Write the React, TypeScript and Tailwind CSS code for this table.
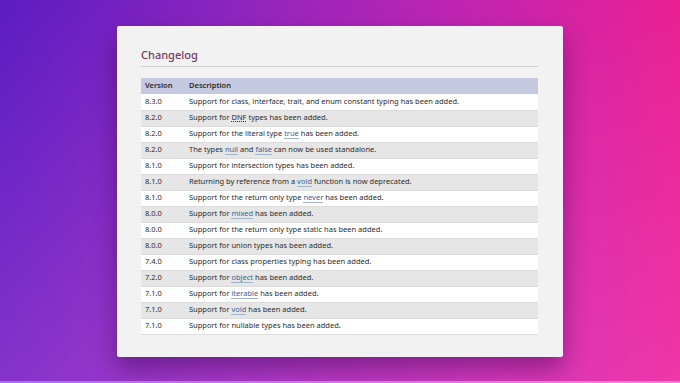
import React from "react";

type Part = string | { code: string; abbr?: boolean };

const rows: { version: string; desc: Part[] }[] = [
  { version: "8.3.0", desc: ["Support for class, interface, trait, and enum constant typing has been added."] },
  { version: "8.2.0", desc: ["Support for ", { code: "DNF", abbr: true }, " types has been added."] },
  { version: "8.2.0", desc: ["Support for the literal type ", { code: "true" }, " has been added."] },
  { version: "8.2.0", desc: ["The types ", { code: "null" }, " and ", { code: "false" }, " can now be used standalone."] },
  { version: "8.1.0", desc: ["Support for intersection types has been added."] },
  { version: "8.1.0", desc: ["Returning by reference from a ", { code: "void" }, " function is now deprecated."] },
  { version: "8.1.0", desc: ["Support for the return only type ", { code: "never" }, " has been added."] },
  { version: "8.0.0", desc: ["Support for ", { code: "mixed" }, " has been added."] },
  { version: "8.0.0", desc: ["Support for the return only type static has been added."] },
  { version: "8.0.0", desc: ["Support for union types has been added."] },
  { version: "7.4.0", desc: ["Support for class properties typing has been added."] },
  { version: "7.2.0", desc: ["Support for ", { code: "object" }, " has been added."] },
  { version: "7.1.0", desc: ["Support for ", { code: "iterable" }, " has been added."] },
  { version: "7.1.0", desc: ["Support for ", { code: "void" }, " has been added."] },
  { version: "7.1.0", desc: ["Support for nullable types has been added."] },
];

function Desc({ parts }: { parts: Part[] }) {
  return (
    <>
      {parts.map((p, i) =>
        typeof p === "string" ? (
          <span key={i}>{p}</span>
        ) : p.abbr ? (
          <span key={i} className="underline decoration-dotted underline-offset-1">
            {p.code}
          </span>
        ) : (
          <span key={i} className="text-[#336699] border-b border-[#9fb3cc]">
            {p.code}
          </span>
        )
      )}
    </>
  );
}

export default function App() {
  return (
    <div className="w-[680px] h-[383px] flex flex-col overflow-hidden bg-[linear-gradient(90deg,#5b1cc2_0%,#8e25be_35%,#c324b0_70%,#ea2092_100%)] font-['Noto_Sans',sans-serif]">
      <div className="flex-1 flex items-start justify-center pt-[26px] bg-[linear-gradient(180deg,rgba(255,255,255,0)_0%,rgba(255,120,230,0.25)_100%)]">
        <div className="w-[446px] h-[331px] bg-[#f2f2f2] rounded-[2px] shadow-[0_12px_24px_rgba(50,0,70,0.45)] pt-[21px] pl-[24px] pr-[25px]">
          <h1 className="text-[11px] leading-[16px] font-medium text-[#793862]">Changelog</h1>
          <div className="mt-[3px] h-px bg-[#cfcfcf]" />
          <table className="mt-[11px] w-full border-collapse text-[7.5px] text-[#2b2b2b]">
            <thead>
              <tr className="bg-[#c4c9e0] h-[16px]">
                <th className="w-[48px] pl-[4px] text-left font-semibold">Version</th>
                <th className="text-left font-semibold">Description</th>
              </tr>
            </thead>
            <tbody>
              {rows.map((r, i) => (
                <tr
                  key={i}
                  className={`h-[16px] border-b border-[#dcdcdc] ${i % 2 === 0 ? "bg-white" : "bg-[#e6e6e6]"}`}
                >
                  <td className="pl-[4px]">{r.version}</td>
                  <td>
                    <Desc parts={r.desc} />
                  </td>
                </tr>
              ))}
            </tbody>
          </table>
        </div>
      </div>
      <div className="h-[2px] bg-[linear-gradient(90deg,#a070f0,#f080d0)]" />
    </div>
  );
}
